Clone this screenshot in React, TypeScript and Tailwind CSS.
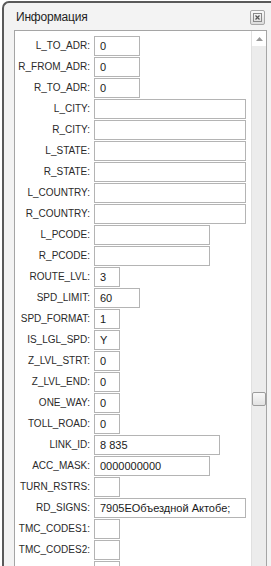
import React from "react";

interface Field {
  name: string;
  value: string;
  width: string;
}

const fields: Field[] = [
  { name: "L_TO_ADR", value: "0", width: "w-[46px]" },
  { name: "R_FROM_ADR", value: "0", width: "w-[46px]" },
  { name: "R_TO_ADR", value: "0", width: "w-[46px]" },
  { name: "L_CITY", value: "", width: "w-[152px]" },
  { name: "R_CITY", value: "", width: "w-[152px]" },
  { name: "L_STATE", value: "", width: "w-[152px]" },
  { name: "R_STATE", value: "", width: "w-[152px]" },
  { name: "L_COUNTRY", value: "", width: "w-[152px]" },
  { name: "R_COUNTRY", value: "", width: "w-[152px]" },
  { name: "L_PCODE", value: "", width: "w-[116px]" },
  { name: "R_PCODE", value: "", width: "w-[116px]" },
  { name: "ROUTE_LVL", value: "3", width: "w-[26px]" },
  { name: "SPD_LIMIT", value: "60", width: "w-[46px]" },
  { name: "SPD_FORMAT", value: "1", width: "w-[26px]" },
  { name: "IS_LGL_SPD", value: "Y", width: "w-[26px]" },
  { name: "Z_LVL_STRT", value: "0", width: "w-[26px]" },
  { name: "Z_LVL_END", value: "0", width: "w-[26px]" },
  { name: "ONE_WAY", value: "0", width: "w-[26px]" },
  { name: "TOLL_ROAD", value: "0", width: "w-[26px]" },
  { name: "LINK_ID", value: "8 835", width: "w-[126px]" },
  { name: "ACC_MASK", value: "0000000000", width: "w-[116px]" },
  { name: "TURN_RSTRS", value: "", width: "w-[26px]" },
  { name: "RD_SIGNS", value: "7905EОбъездной Актобе;", width: "w-[152px]" },
  { name: "TMC_CODES1", value: "", width: "w-[26px]" },
  { name: "TMC_CODES2", value: "", width: "w-[26px]" },
  { name: "TMC_CODES3", value: "", width: "w-[26px]" },
];

export default function App() {
  return (
    <div className="w-[271px] h-[566px] overflow-hidden bg-white font-['Liberation_Sans',Arial,sans-serif]">
      <div className="ml-[2px] mt-[1px] h-[600px] border-l-2 border-t-2 border-[#5a5a5a] rounded-tl-[7px] bg-[#f3f3f3] flex flex-col">
        {/* заголовок */}
        <div className="h-[27px] flex items-center justify-between pl-[12px] pr-[5px] pt-[1px]">
          <span className="text-[12px] text-[#1e1e1e] tracking-[-0.2px]">Информация</span>
          <div className="w-[15px] h-[15px] border border-[#a8a8a8] rounded-[2px] bg-gradient-to-b from-[#fafafa] to-[#dcdcdc] flex items-center justify-center mr-[1px]">
            <svg width="9" height="9" viewBox="0 0 9 9">
              <rect x="0.5" y="0.5" width="8" height="8" fill="none" stroke="#8a8a8a" />
              <path d="M2.5 2.5 L6.5 6.5 M6.5 2.5 L2.5 6.5" stroke="#555" strokeWidth="1.2" />
            </svg>
          </div>
        </div>

        {/* панель */}
        <div className="ml-[10px] mr-[4px] flex-1 border border-[#a5a5a5] bg-white flex">
          <div className="flex-1 pt-[4px]">
            {fields.map((f) => (
              <div key={f.name} className="flex items-center h-[21px]">
                <div className="w-[76px] text-right text-[10px] text-[#2a2a2a] pr-[1px] whitespace-nowrap">{f.name}:</div>
                <div className={`ml-[3px] h-[20px] ${f.width} border border-[#b4b4b4] bg-white text-[11px] text-[#1a1a1a] pl-[5px] leading-[18px] whitespace-nowrap overflow-hidden`}>
                  {f.value}
                </div>
              </div>
            ))}
          </div>
          {/* полоса прокрутки */}
          <div className="w-[15px] bg-[#ececec] border-l border-[#e0e0e0] flex flex-col items-center">
            <div className="h-[15px] w-full bg-white flex items-center justify-center">
              <svg width="7" height="4" viewBox="0 0 7 4">
                <path d="M0 4 L3.5 0 L7 4 Z" fill="#9a9a9a" />
              </svg>
            </div>
            <div className="h-[346px]" />
            <div className="w-[14px] h-[14px] border border-[#9c9c9c] rounded-[2px] bg-gradient-to-b from-[#f8f8f8] to-[#e2e2e2]" />
          </div>
        </div>
      </div>
    </div>
  );
}
